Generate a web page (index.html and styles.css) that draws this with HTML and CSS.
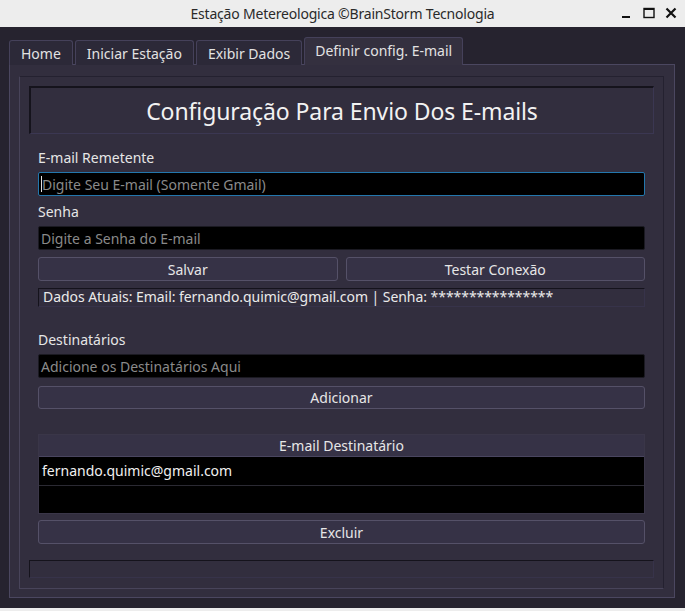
FILE: index.html
```html
<!DOCTYPE html>
<html lang="pt">
<head>
<meta charset="utf-8">
<title>Estação Metereologica</title>
<link rel="stylesheet" href="styles.css">
</head>
<body>
<div class="titlebar">
  <span class="title">Estação Metereologica ©BrainStorm Tecnologia</span>
  <div class="wctrls">
    <svg class="wbtn" width="12" height="12" viewBox="0 0 12 12"><rect x="1" y="9" width="8" height="2" fill="#111"/></svg>
    <svg class="wbtn" width="12" height="12" viewBox="0 0 12 12"><rect x="1" y="1.5" width="10" height="9" fill="none" stroke="#111" stroke-width="1.4"/><rect x="1" y="1" width="10" height="2" fill="#111"/></svg>
    <svg class="wbtn" width="12" height="12" viewBox="0 0 12 12"><path d="M1.5 1.5 L10.5 10.5 M10.5 1.5 L1.5 10.5" stroke="#111" stroke-width="2.2"/></svg>
  </div>
</div>
<div class="window">
  <div class="tabs">
    <div class="tab">Home</div>
    <div class="tab">Iniciar Estação</div>
    <div class="tab">Exibir Dados</div>
    <div class="tab active">Definir config. E-mail</div>
  </div>
  <div class="pane">
    <div class="frame">
      <div class="heading">Configuração Para Envio Dos E-mails</div>
      <div class="form">
        <div class="label first">E-mail Remetente</div>
        <div class="input focus"><span class="caret"></span><span class="ph">Digite Seu E-mail (Somente Gmail)</span></div>
        <div class="label">Senha</div>
        <div class="input"><span class="ph">Digite a Senha do E-mail</span></div>
        <div class="btnrow">
          <div class="btn">Salvar</div>
          <div class="btn">Testar Conexão</div>
        </div>
        <div class="info">Dados Atuais: Email: fernando.quimic@gmail.com | Senha: ****************</div>
        <div class="label dest">Destinatários</div>
        <div class="input"><span class="ph">Adicione os Destinatários Aqui</span></div>
        <div class="btn single add">Adicionar</div>
        <div class="table">
          <div class="thead">E-mail Destinatário</div>
          <div class="row r1">fernando.quimic@gmail.com</div>
          <div class="row r2"></div>
        </div>
        <div class="btn single del">Excluir</div>
      </div>
      <div class="status"></div>
    </div>
  </div>
</div>
<div class="bottomstrip"></div>
</body>
</html>
```
FILE: styles.css
```css
* { box-sizing: border-box; }
html, body { margin: 0; padding: 0; }
body {
  width: 685px;
  height: 611px;
  overflow: hidden;
  background: #26232f;
  font-family: "Noto Sans", "Open Sans", sans-serif;
  font-size: 14px;
  color: #e6e6e6;
}
.titlebar {
  height: 27px;
  background: #ededed;
  display: flex;
  align-items: center;
  justify-content: center;
  position: relative;
}
.title {
  color: #2a2a2a;
  font-size: 14px;
  letter-spacing: -0.2px;
}
.wctrls {
  position: absolute;
  right: 8px;
  top: 7px;
  display: flex;
  gap: 10px;
}
.wbtn { display: block; }
.window {
  height: 581px;
  padding-top: 10px;
}
.tabs {
  display: flex;
  align-items: flex-end;
  height: 27px;
  padding-left: 9px;
  gap: 2px;
}
.tab {
  height: 25px;
  padding: 0 11px;
  background: #2c2938;
  border: 1px solid #45415a;
  border-bottom: none;
  border-radius: 3px 3px 0 0;
  display: flex;
  align-items: center;
  color: #e2e2e2;
  margin-bottom: -1px;
}
.tab.active {
  height: 28px;
  background: #34303f;
  padding: 0 10px 2px;
  position: relative;
  z-index: 1;
}
.pane {
  margin: 0 10px 0 9px;
  height: 534px;
  background: #322e3e;
  border: 1px solid #4b4760;
  padding: 11px 10px 8px 9px;
}
.frame {
  height: 100%;
  border: 1px solid #242130;
  border-left-color: #48445a;
  border-bottom-color: #48445a;
  padding: 9px 9px 0;
  display: flex;
  flex-direction: column;
}
.heading {
  height: 48px;
  border-top: 2px solid #15131c;
  border-left: 2px solid #15131c;
  border-right: 1px solid #3b3752;
  border-bottom: 1px solid #3b3752;
  display: flex;
  align-items: center;
  justify-content: center;
  font-size: 23px;
  color: #f2f2f2;
  letter-spacing: -0.1px;
  padding-top: 1px;
}
.form {
  padding: 0 9px;
  display: flex;
  flex-direction: column;
}
.label {
  height: 18px;
  line-height: 18px;
  margin-top: 7px;
  margin-bottom: 5px;
  color: #e6e6e6;
}
.label.first { margin-top: 15px; }
.label.dest { margin-top: 24px; }
.input {
  height: 24px;
  background: #000;
  border: 1px solid #1b1a22;
  border-radius: 2px;
  display: flex;
  align-items: center;
  padding-left: 2px;
}
.input.focus { border-color: #2377ad; }
.caret {
  width: 1px;
  height: 16px;
  background: #e0e0e0;
}
.ph { color: #8a8a8a; }
.btnrow {
  display: flex;
  gap: 8px;
  margin-top: 7px;
}
.btn {
  flex: 1;
  height: 24px;
  background: #363246;
  border: 1px solid #555168;
  border-radius: 3px;
  display: flex;
  align-items: center;
  justify-content: center;
  color: #e6e6e6;
}
.info {
  margin-top: 7px;
  height: 19px;
  border-top: 1px solid #15131c;
  border-left: 1px solid #15131c;
  border-right: 1px solid #37334a;
  border-bottom: 1px solid #37334a;
  padding-left: 4px;
  line-height: 16px;
  color: #eaeaea;
  letter-spacing: -0.05px;
}
.btn.single { flex: none; }
.add { margin-top: 8px; height: 23px; }
.table {
  margin-top: 25px;
  height: 80px;
  border: 1px solid #3a3648;
  background: #000;
  display: flex;
  flex-direction: column;
}
.thead {
  height: 22px;
  background: #363246;
  border-bottom: 1px solid #4a4660;
  display: flex;
  align-items: center;
  justify-content: center;
  color: #e6e6e6;
}
.row {
  background: #000;
  padding-left: 3px;
  color: #f0f0f0;
}
.r1 {
  height: 29px;
  line-height: 27px;
  border-bottom: 1px solid #2b2a33;
}
.r2 { flex: 1; }
.del { margin-top: 6px; }
.status {
  margin-top: 16px;
  height: 18px;
  border-top: 1px solid #15131c;
  border-left: 1px solid #15131c;
  border-right: 1px solid #37334a;
  border-bottom: 1px solid #37334a;
}
.bottomstrip {
  height: 3px;
  background: #ededed;
}
```
